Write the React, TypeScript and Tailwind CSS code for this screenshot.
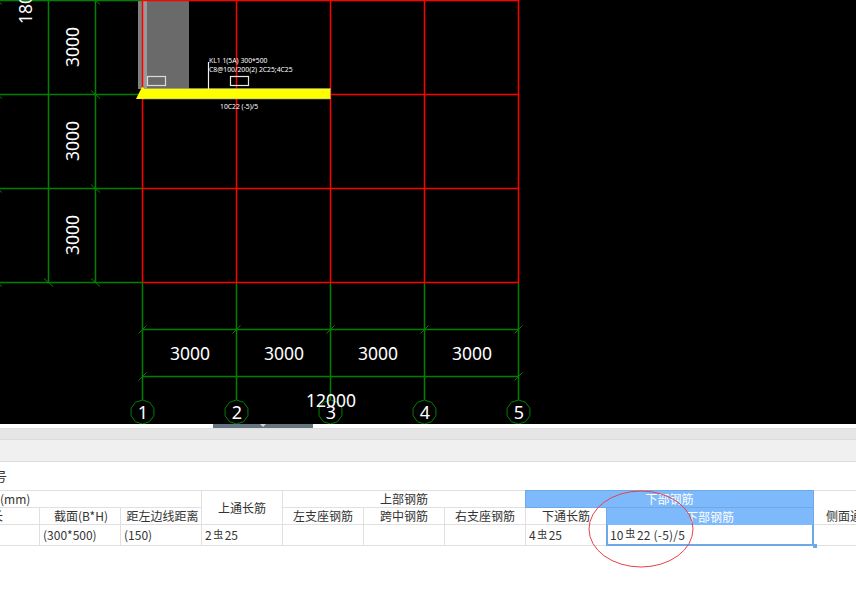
const sans = "font-['Noto_Sans_CJK_SC','Noto_Sans',sans-serif]";

const gridX = [143, 237, 331, 425, 519];
const gridY = [0, 94, 188, 282];
const green = '#008000';
const red = '#ff0000';
const lw = 1.5;

function Tick({ x, y }: { x: number; y: number }) {
  return <line x1={x - 4.5} y1={y + 4.5} x2={x + 3.5} y2={y - 3.5} stroke={green} strokeWidth="1" />;
}

function TickV({ x, y }: { x: number; y: number }) {
  return <line x1={x - 4} y1={y - 3.5} x2={x + 5} y2={y + 4.5} stroke={green} strokeWidth="1" />;
}

function Bubble({ x, label }: { x: number; label: string }) {
  const y = 412;
  const r = 12;
  const pts = Array.from({ length: 10 }, (_, i) => {
    const a = (Math.PI * 2 * i) / 10 + Math.PI / 2;
    return `${x - 0.5 + r * Math.cos(a)},${y + r * Math.sin(a)}`;
  }).join(' ');
  return (
    <g>
      <polygon points={pts} fill="none" stroke={green} strokeWidth="1" />
      <text x={x} y={y + 7} textAnchor="middle" fill="#fff" fontSize="18">{label}</text>
    </g>
  );
}

function Drawing() {
  return (
    <svg width="856" height="424" viewBox="0 0 856 424" className="block" fontFamily="'Noto Sans', sans-serif">
      {/* column */}
      <rect x="138" y="0" width="51" height="89" fill="#6a6a6a" />
      <rect x="138" y="0" width="4" height="89" fill="#808080" />
      <rect x="143" y="0" width="4" height="89" fill="#999999" />

      {/* dimension lines, left side */}
      {gridY.map((y) => (
        <line key={y} x1="0" y1={y + 0.5} x2="143" y2={y + 0.5} stroke={green} strokeWidth={lw} />
      ))}
      <line x1="48.5" y1="0" x2="48.5" y2="282" stroke={green} strokeWidth={lw} />
      <line x1="95.5" y1="0" x2="95.5" y2="282" stroke={green} strokeWidth={lw} />
      {gridY.map((y) => (
        <g key={y}>
          <TickV x={95} y={y} />
          <TickV x={-3} y={y} />
        </g>
      ))}
      <TickV x={48} y={282} />

      {/* dimension lines, bottom */}
      {gridX.map((x) => (
        <line key={x} x1={x - 0.5} y1="282" x2={x - 0.5} y2="400" stroke={green} strokeWidth={lw} />
      ))}
      <line x1="143" y1="329.5" x2="519" y2="329.5" stroke={green} strokeWidth={lw} />
      <line x1="143" y1="376.5" x2="519" y2="376.5" stroke={green} strokeWidth={lw} />
      {gridX.map((x) => (
        <Tick key={x} x={x} y={329} />
      ))}
      <Tick x={143} y={376} />
      <Tick x={519} y={376} />

      {/* red axis grid */}
      {gridX.map((x) => (
        <line key={x} x1={x - 0.5} y1="0" x2={x - 0.5} y2="282" stroke={red} strokeWidth={lw} />
      ))}
      {gridY.map((y) => (
        <line key={y} x1="143" y1={y + 0.5} x2="519" y2={y + 0.5} stroke={red} strokeWidth={lw} />
      ))}

      {/* beam */}
      <rect x="142.5" y="88.5" width="188" height="10.5" fill="#ffff00" stroke="#8a9a9a" strokeWidth="0.6" />
      <polygon points="136,99 142,87 144,88 144,99" fill="#ffff00" />
      <rect x="147.5" y="76.5" width="18" height="9" fill="none" stroke="#dcdcdc" strokeWidth="1.2" />
      <rect x="230.5" y="76.5" width="18" height="9" fill="none" stroke="#e6e6e6" strokeWidth="1.2" />
      <line x1="208.5" y1="62" x2="208.5" y2="89" stroke="#f0f0f0" strokeWidth="1.2" />
      <text x="209" y="63" fill="#fff" fontSize="6.8">KL1 1(5A) 300*500</text>
      <text x="209" y="72" fill="#fff" fontSize="6.8">C8@100/200(2) 2C25;4C25</text>
      <text x="220" y="109" fill="#fff" fontSize="6.8">10C22 (-5)/5</text>

      {/* dimension text */}
      {[141, 47, 235].map((y) => (
        <text key={y} transform={`translate(79 ${y}) rotate(-90)`} textAnchor="middle" fill="#fff" fontSize="17.5">3000</text>
      ))}
      <text transform="translate(32 24) rotate(-90)" fill="#fff" fontSize="17.5">1800</text>
      {[190, 284, 378, 472].map((x) => (
        <text key={x} x={x} y="360" textAnchor="middle" fill="#fff" fontSize="17.5">3000</text>
      ))}

      {gridX.map((x, i) => (
        <Bubble key={x} x={x} label={String(i + 1)} />
      ))}
      <text x="331" y="407" textAnchor="middle" fill="#fff" fontSize="17.5">12000</text>
    </svg>
  );
}

function Rebar({ text }: { text: [string, string] }) {
  return (
    <>
      {text[0]}
      <span className="relative top-[-2px] mx-[1.5px] text-[10px]">虫</span>
      {text[1]}
    </>
  );
}

const cell = 'border-r border-b border-[#e0e0e0] flex items-center justify-center min-w-0 whitespace-nowrap overflow-hidden';
const value = 'border-r border-b border-[#e0e0e0] flex items-center pl-[3px] min-w-0 whitespace-nowrap overflow-hidden';

function PropertyTable() {
  return (
    <div className={`grid grid-cols-[40px_81px_81px_81px_81px_81px_81px_81px_207px_60px] grid-rows-[17px_17px_21px] border-t border-[#e0e0e0] text-[12px] text-[#333333] ${sans}`}>
      <div className={`${cell} col-span-3 !justify-start`}>(mm)</div>
      <div className={`${cell} row-span-2 pt-[1px]`}>上通长筋</div>
      <div className={`${cell} col-span-3`}>上部钢筋</div>
      <div className="col-span-2 -ml-px -mt-px flex items-center justify-center border border-[#6fa8e6] bg-[#7eb9fb] text-white">下部钢筋</div>
      <div className={`${cell} border-r-0 border-b-0`} />

      <div className={`${cell} !justify-start`}><span className="-ml-[9px]">长</span></div>
      <div className={`${cell} pl-[2px]`}>截面(B*H)</div>
      <div className={`${cell} pl-[3px]`}>距左边线距离</div>
      <div className={cell}>左支座钢筋</div>
      <div className={cell}>跨中钢筋</div>
      <div className={cell}>右支座钢筋</div>
      <div className={cell}>下通长筋</div>
      <div className="-ml-px flex items-center justify-center border-x border-[#6fa8e6] bg-[#7eb9fb] text-white">下部钢筋</div>
      <div className={`${cell} !justify-start pl-3 border-r-0`}>侧面通长筋</div>

      <div className={value} />
      <div className={value}>(300*500)</div>
      <div className={value}>(150)</div>
      <div className={value}><Rebar text={['2', '25']} /></div>
      <div className={value} />
      <div className={value} />
      <div className={value} />
      <div className={value}><Rebar text={['4', '25']} /></div>
      <div className="relative -ml-px flex items-center whitespace-nowrap border-x-2 border-b-2 border-[#6fa8e6] pl-[2px] tracking-[0.2px]">
        <Rebar text={['10', '22 (-5)/5']} />
        <span className="absolute right-[-5px] bottom-[-4px] h-[4px] w-[4px] bg-[#6fa8e6]" />
      </div>
      <div className="border-b border-[#e0e0e0]" />
    </div>
  );
}

export default function App() {
  return (
    <div className="relative w-[856px] h-[594px] overflow-hidden bg-white">
      <div className="bg-black h-[424px]">
        <Drawing />
      </div>
      {/* splitter */}
      <div className="h-[4px] flex justify-center pr-[330px]">
        <div className="w-[100px] h-[4px] bg-[#667480] flex justify-center">
          <div className="w-0 h-0 border-x-[3px] border-x-transparent border-t-[3px] border-t-[#cfd4d9]" />
        </div>
      </div>
      <div className="h-[11px] bg-[#e6e6e6] border-t border-[#dedede]" />
      <div className="h-[23px] bg-[#f0f0f0] border-y border-[#dcdcdc]" />
      <div className={`h-[28px] flex items-center text-[13px] text-[#333333] ${sans}`}>
        <span className="-ml-[6px]">号</span>
      </div>
      <PropertyTable />
      {/* hand drawn mark */}
      <svg width="856" height="594" className="absolute inset-0 pointer-events-none">
        <ellipse cx="641" cy="529" rx="52" ry="38" fill="none" stroke="#e8414a" strokeWidth="1" />
      </svg>
    </div>
  );
}
